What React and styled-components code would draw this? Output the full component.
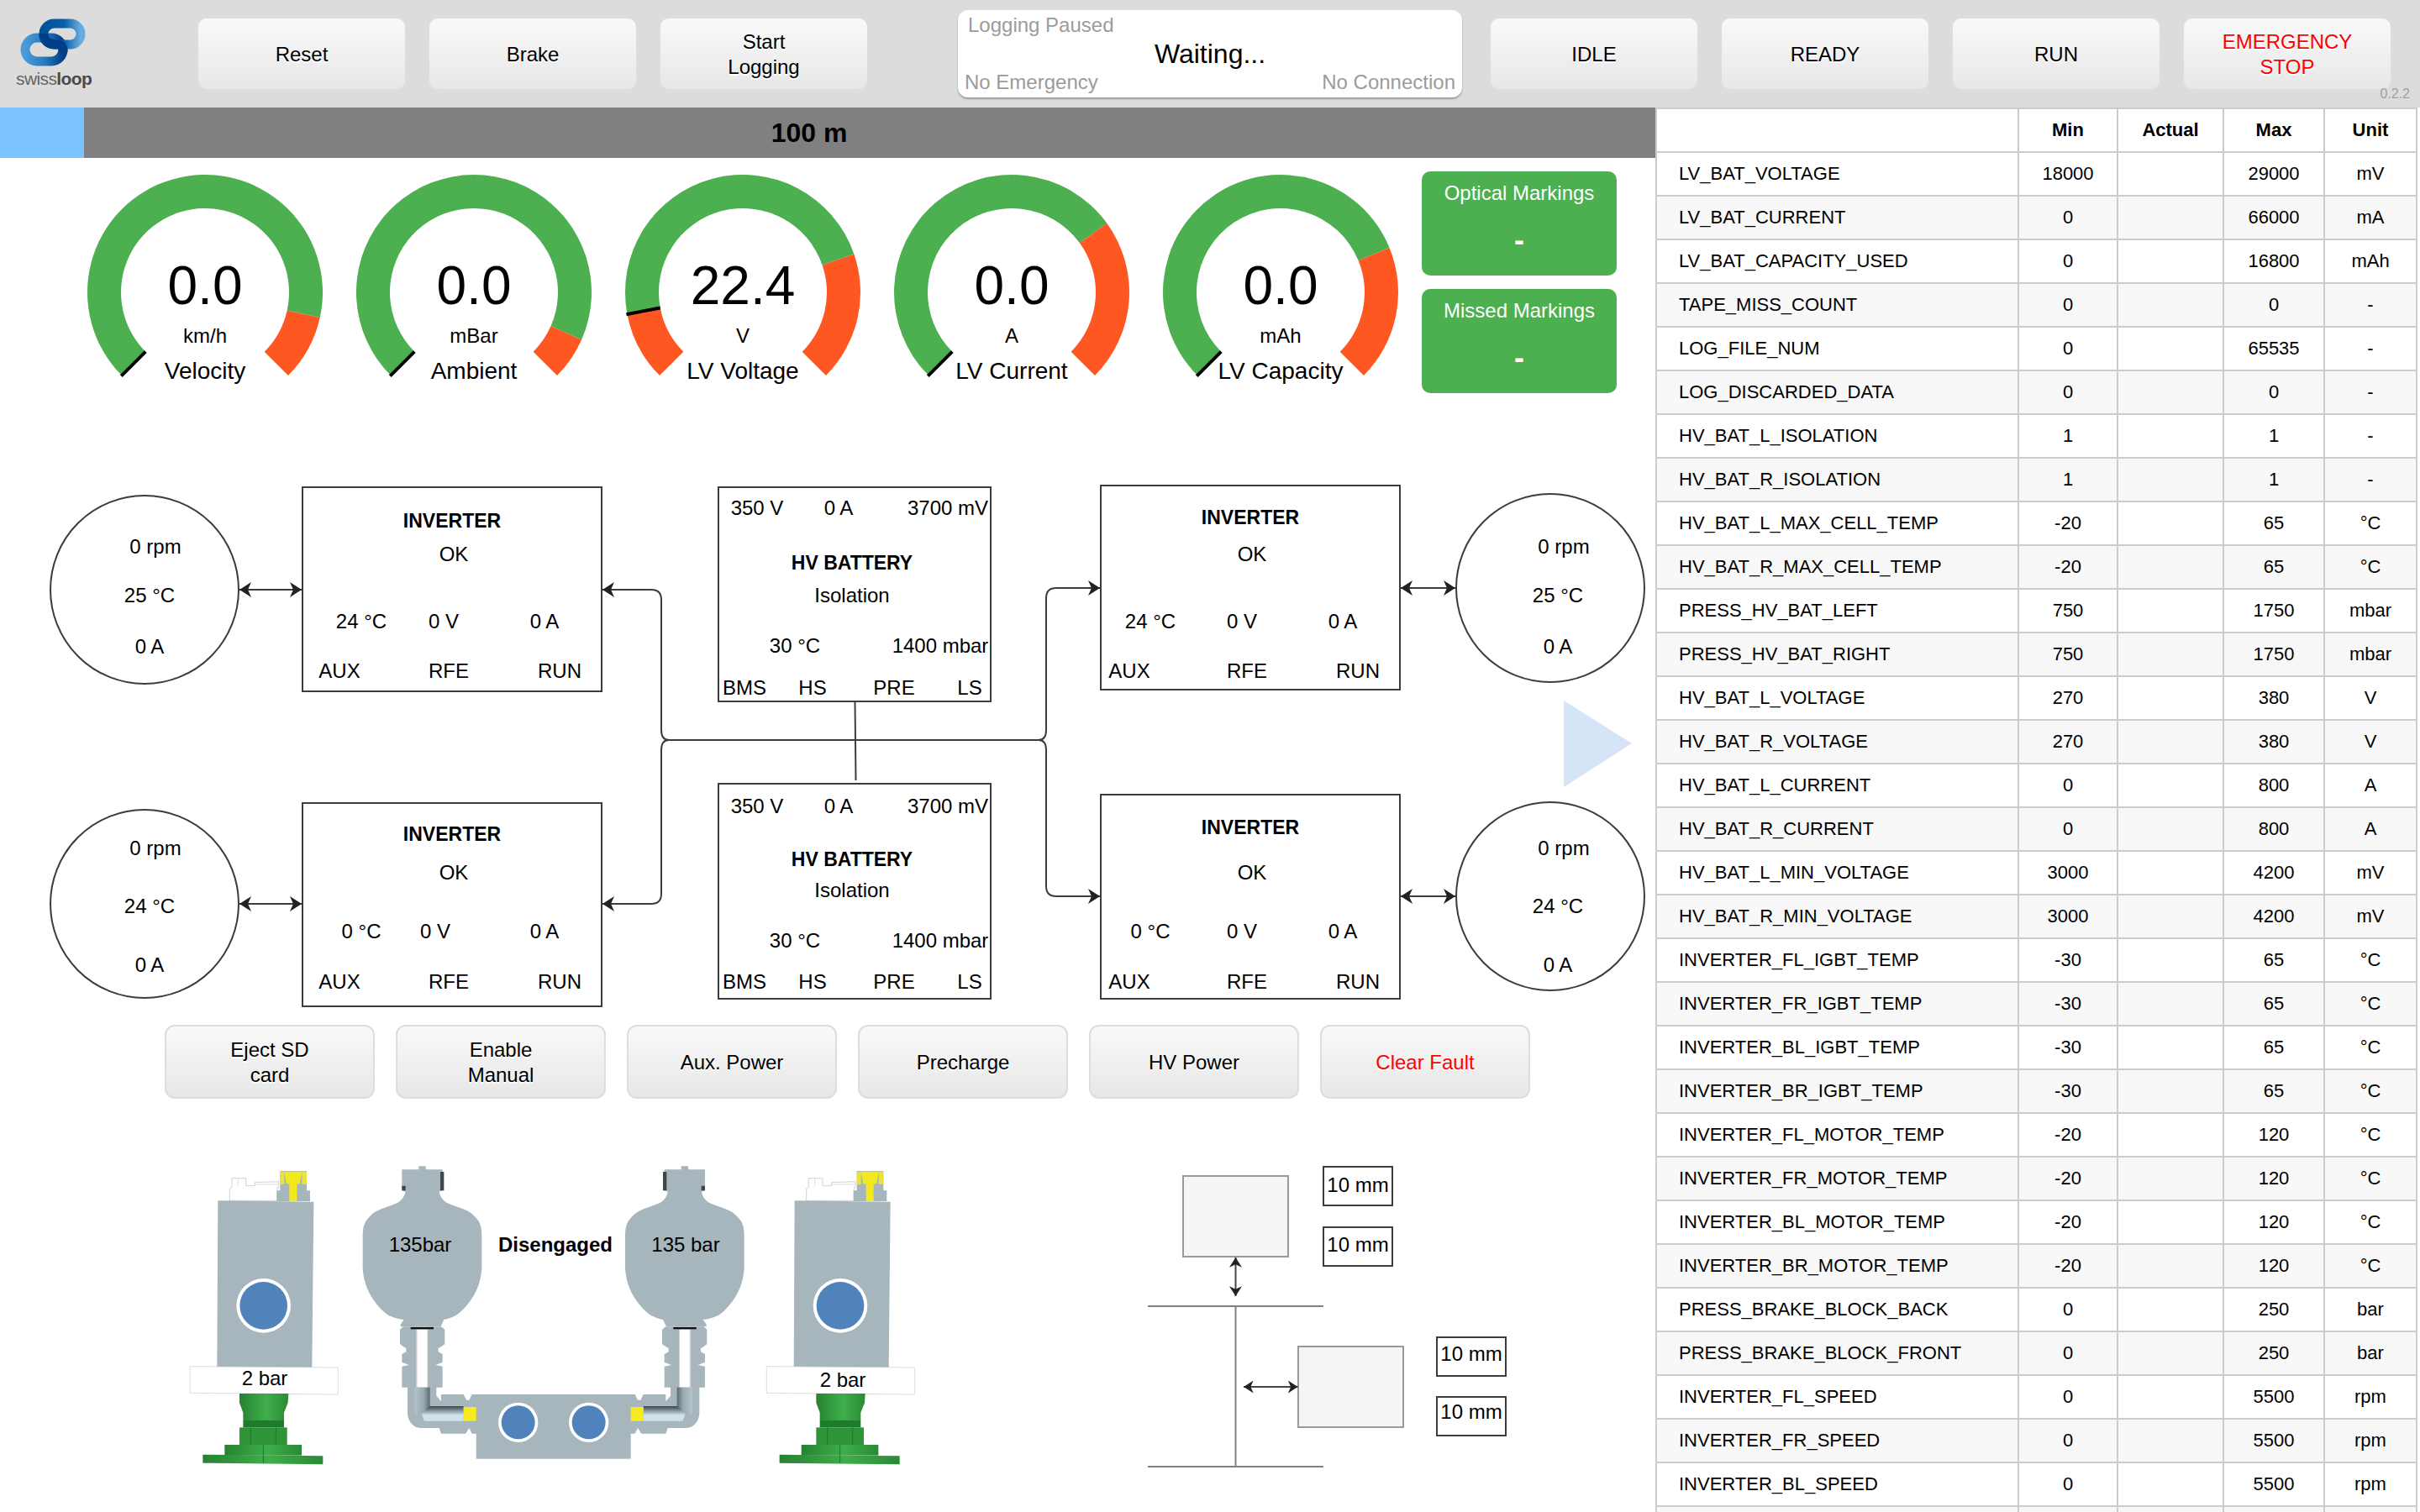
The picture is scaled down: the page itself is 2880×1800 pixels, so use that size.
import React from 'react'
import styled, { createGlobalStyle } from 'styled-components'

const GlobalStyle = createGlobalStyle`
  html, body {
    margin: 0;
    padding: 0;
    background: #fff;
    overflow: hidden;
  }
  body {
    font-family: "Liberation Sans", Arial, sans-serif;
    color: #000;
  }
`

const Page = styled.div`
  width: 2880px;
  height: 1800px;
  display: flex;
  flex-direction: column;
  overflow: hidden;
`

/* header */
const Header = styled.header`
  position: relative;
  height: 128px;
  flex: none;
  display: flex;
  align-items: center;
  background: #dcdcdc;
`

const LogoBox = styled.div`
  width: 234px;
  height: 128px;
  flex: none;
  padding: 20px 0 0 19px;
  box-sizing: border-box;
  svg {
    display: block;
  }
`

const LogoText = styled.div`
  font-size: 21px;
  line-height: 24px;
  letter-spacing: -0.6px;
  color: #666;
  margin-top: 2px;
  b {
    color: #4a4a4a;
  }
`

const ButtonRow = styled.div`
  display: flex;
  gap: 25px;
  flex: none;
  padding-left: ${p => p.$left || 0}px;
`

const Button = styled.button`
  width: 250px;
  height: 88px;
  flex: none;
  box-sizing: border-box;
  padding: 2px 0 0;
  border: 2px solid #ddd;
  border-radius: 12px;
  background: linear-gradient(to bottom, #f9f9f9, #e7e7e7);
  color: ${p => (p.$danger ? '#f00' : '#000')};
  font-family: inherit;
  font-size: 24px;
  line-height: 30px;
  text-align: center;
  white-space: pre-line;
  text-shadow: 0 2px 0 #fff;
`

const StatusPanel = styled.div`
  width: 600px;
  height: 104px;
  flex: none;
  margin: 0 32px 0 106px;
  box-sizing: border-box;
  padding: 4px 8px;
  display: grid;
  grid-template-columns: 1fr 1fr;
  grid-template-rows: 28px 40px 28px;
  background: #fff;
  border-radius: 12px;
  box-shadow: 0 2px 2px rgba(0, 0, 0, 0.3);
  font-size: 24px;
  line-height: 28px;
  color: #9b9b9b;
`

const StatusTop = styled.div`
  grid-column: 1 / 3;
  padding-left: 4px;
`

const StatusMain = styled.div`
  grid-column: 1 / 3;
  text-align: center;
  font-size: 32px;
  line-height: 40px;
  color: #000;
`

const StatusRight = styled.div`
  text-align: right;
`

const Version = styled.div`
  position: absolute;
  right: 12px;
  bottom: 8px;
  font-size: 16px;
  line-height: 16px;
  color: #a0a0a0;
`

/* main split */
const Body = styled.div`
  flex: 1;
  display: flex;
  min-height: 0;
`

const LeftPane = styled.div`
  width: 1970px;
  flex: none;
  display: flex;
  flex-direction: column;
`

const RightPane = styled.div`
  flex: 1;
  overflow: hidden;
`

const Progress = styled.div`
  position: relative;
  height: 60px;
  flex: none;
  padding-right: 44px;
  background: #808080;
  font-size: 32px;
  font-weight: bold;
  line-height: 60px;
  text-align: center;
`

const ProgressFill = styled.div`
  position: absolute;
  left: 0;
  top: 0;
  bottom: 0;
  background: #7cc4ff;
`

const ProgressText = styled.span`
  position: relative;
`

/* gauges */
const GaugeRow = styled.div`
  height: 372px;
  flex: none;
  box-sizing: border-box;
  padding: 16px 0 0 84px;
  display: flex;
  align-items: flex-start;
`

const GaugeBox = styled.div`
  position: relative;
  width: 320px;
  height: 270px;
  flex: none;
  svg {
    display: block;
  }
`

const GaugeText = styled.div`
  position: absolute;
  inset: 0;
  padding-top: 104px;
  display: flex;
  flex-direction: column;
  align-items: center;
`

const GaugeValue = styled.div`
  font-size: 64px;
  line-height: 64px;
`

const GaugeUnit = styled.div`
  font-size: 24px;
  line-height: 28px;
  margin-top: 14px;
`

const GaugeTitle = styled.div`
  font-size: 28px;
  line-height: 32px;
  margin-top: 12px;
`

const MarkingColumn = styled.div`
  margin-left: 8px;
  display: flex;
  flex-direction: column;
  gap: 16px;
`

const MarkingCard = styled.div`
  width: 232px;
  height: 124px;
  box-sizing: border-box;
  padding-top: 10px;
  background: #4caf50;
  border-radius: 10px;
  color: #fff;
  text-align: center;
  font-size: 24px;
  line-height: 32px;
`

const MarkingValue = styled.div`
  margin-top: 20px;
  font-size: 36px;
  font-weight: bold;
  line-height: 40px;
`

/* power diagram */
const Diagram = styled.div`
  position: relative;
  height: 660px;
  flex: none;
`

const Overlay = styled.svg`
  position: absolute;
  left: 0;
  top: 0;
`

const Node = styled.div`
  position: absolute;
  left: ${p => p.$x}px;
  top: ${p => p.$y}px;
  width: ${p => p.$w}px;
  height: ${p => p.$h}px;
  box-sizing: border-box;
  border: 2px solid #3c3c3c;
  border-radius: ${p => (p.$round ? '50%' : '0')};
`

const Label = styled.div`
  position: absolute;
  left: ${p => p.$x - 2}px;
  top: ${p => p.$y - 2}px;
  transform: translate(-50%, -50%);
  white-space: nowrap;
  font-size: ${p => (p.$bold ? 23 : 24)}px;
  font-weight: ${p => (p.$bold ? 'bold' : 'normal')};
  line-height: 28px;
`

const LowerRow = styled(ButtonRow)`
  height: 88px;
`

/* bottom pictures */
const Lower = styled.div`
  flex: 1;
  display: flex;
  padding: 52px 0 0 200px;
`

const Hydraulics = styled.div`
  position: relative;
  width: 920px;
  height: 420px;
  flex: none;
`

const GapPanel = styled.div`
  position: relative;
  width: 440px;
  height: 420px;
  flex: none;
  margin-left: 240px;
`

const GapBox = styled.div`
  position: absolute;
  left: ${p => p.$x}px;
  top: ${p => p.$y}px;
  width: 84px;
  height: 48px;
  box-sizing: border-box;
  border: 2px solid #3c3c3c;
  font-size: 24px;
  line-height: ${p => 44 - p.$lift * 2}px;
  text-align: center;
  white-space: nowrap;
`

const PicLabel = styled.div`
  position: absolute;
  left: ${p => p.$x}px;
  top: ${p => p.$y}px;
  transform: translate(-50%, -50%);
  white-space: nowrap;
  font-size: 24px;
  line-height: 28px;
  font-weight: ${p => (p.$bold ? 'bold' : 'normal')};
`

/* limits table */
const Table = styled.table`
  width: 905px;
  table-layout: fixed;
  border-collapse: collapse;
  font-size: 22px;
  line-height: 26px;
`

const Col = styled.col`
  width: ${p => p.$w}px;
`

const HeadCell = styled.th`
  height: 52px;
  padding: 0;
  border: 2px solid #ccc;
  font-weight: bold;
  text-align: center;
  box-sizing: border-box;
`

const Row = styled.tr`
  background: ${p => (p.$odd ? '#f8f8f8' : '#fff')};
`

const Cell = styled.td`
  height: 52px;
  padding: 0;
  border: 2px solid #ccc;
  text-align: center;
  box-sizing: border-box;
  white-space: nowrap;
`

const NameCell = styled(Cell)`
  padding-left: 26px;
  text-align: left;
`

const limits = [
  ['LV_BAT_VOLTAGE', 18000, 29000, 'mV'],
  ['LV_BAT_CURRENT', 0, 66000, 'mA'],
  ['LV_BAT_CAPACITY_USED', 0, 16800, 'mAh'],
  ['TAPE_MISS_COUNT', 0, 0, '-'],
  ['LOG_FILE_NUM', 0, 65535, '-'],
  ['LOG_DISCARDED_DATA', 0, 0, '-'],
  ['HV_BAT_L_ISOLATION', 1, 1, '-'],
  ['HV_BAT_R_ISOLATION', 1, 1, '-'],
  ['HV_BAT_L_MAX_CELL_TEMP', -20, 65, '°C'],
  ['HV_BAT_R_MAX_CELL_TEMP', -20, 65, '°C'],
  ['PRESS_HV_BAT_LEFT', 750, 1750, 'mbar'],
  ['PRESS_HV_BAT_RIGHT', 750, 1750, 'mbar'],
  ['HV_BAT_L_VOLTAGE', 270, 380, 'V'],
  ['HV_BAT_R_VOLTAGE', 270, 380, 'V'],
  ['HV_BAT_L_CURRENT', 0, 800, 'A'],
  ['HV_BAT_R_CURRENT', 0, 800, 'A'],
  ['HV_BAT_L_MIN_VOLTAGE', 3000, 4200, 'mV'],
  ['HV_BAT_R_MIN_VOLTAGE', 3000, 4200, 'mV'],
  ['INVERTER_FL_IGBT_TEMP', -30, 65, '°C'],
  ['INVERTER_FR_IGBT_TEMP', -30, 65, '°C'],
  ['INVERTER_BL_IGBT_TEMP', -30, 65, '°C'],
  ['INVERTER_BR_IGBT_TEMP', -30, 65, '°C'],
  ['INVERTER_FL_MOTOR_TEMP', -20, 120, '°C'],
  ['INVERTER_FR_MOTOR_TEMP', -20, 120, '°C'],
  ['INVERTER_BL_MOTOR_TEMP', -20, 120, '°C'],
  ['INVERTER_BR_MOTOR_TEMP', -20, 120, '°C'],
  ['PRESS_BRAKE_BLOCK_BACK', 0, 250, 'bar'],
  ['PRESS_BRAKE_BLOCK_FRONT', 0, 250, 'bar'],
  ['INVERTER_FL_SPEED', 0, 5500, 'rpm'],
  ['INVERTER_FR_SPEED', 0, 5500, 'rpm'],
  ['INVERTER_BL_SPEED', 0, 5500, 'rpm'],
]

const gauges = [
  { value: '0.0', unit: 'km/h', title: 'Velocity', hi: 102.4 },
  { value: '0.0', unit: 'mBar', title: 'Ambient', hi: 113.8 },
  { value: '22.4', unit: 'V', title: 'LV Voltage', lo: -100.7, hi: 71 },
  { value: '0.0', unit: 'A', title: 'LV Current', hi: 54 },
  { value: '0.0', unit: 'mAh', title: 'LV Capacity', hi: 67.7 },
]

const inverters = [
  {
    x: 359, y: 19, h: 245, head: 41, ok: 81, row: 161, foot: 220, temp: '24 °C', tempX: 71, voltX: 169, auxX: 45,
  },
  {
    x: 359, y: 395, h: 244, head: 38, ok: 84, row: 154, foot: 214, temp: '0 °C', tempX: 71, voltX: 159, auxX: 45,
  },
  {
    x: 1309, y: 17, h: 245, head: 39, ok: 83, row: 163, foot: 222, temp: '24 °C', tempX: 60, voltX: 169, auxX: 35,
  },
  {
    x: 1309, y: 385, h: 245, head: 40, ok: 94, row: 164, foot: 224, temp: '0 °C', tempX: 60, voltX: 169, auxX: 35,
  },
]

const batteries = [
  { y: 19, h: 257, top: 26, head: 91, iso: 130, row: 190, foot: 240 },
  { y: 372, h: 258, top: 28, head: 91, iso: 128, row: 188, foot: 237 },
]

const wheels = [
  { x: 59, y: 29, temp: '25 °C', rpmX: 126, tempX: 119, ys: [62, 120, 181] },
  { x: 59, y: 403, temp: '24 °C', rpmX: 126, tempX: 119, ys: [47, 116, 186] },
  { x: 1732, y: 27, temp: '25 °C', rpmX: 129, tempX: 122, ys: [64, 122, 183] },
  { x: 1732, y: 394, temp: '24 °C', rpmX: 129, tempX: 122, ys: [56, 125, 195] },
]

const polar = (r, deg, cx = 160, cy = 144) => {
  const a = (deg * Math.PI) / 180
  return [cx + r * Math.sin(a), cy - r * Math.cos(a)]
}

const sector = (from, to, R = 140, r = 100) => {
  const [x1, y1] = polar(R, from)
  const [x2, y2] = polar(R, to)
  const [x3, y3] = polar(r, to)
  const [x4, y4] = polar(r, from)
  const large = to - from > 180 ? 1 : 0
  return `M${x1} ${y1}A${R} ${R} 0 ${large} 1 ${x2} ${y2}L${x3} ${y3}A${r} ${r} 0 ${large} 0 ${x4} ${y4}Z`
}

const Gauge = ({ value, unit, title, lo, hi }) => {
  const start = lo === undefined ? -135 : lo
  const [nx1, ny1] = polar(100, start)
  const [nx2, ny2] = polar(141, start)
  return (
    <GaugeBox>
      <svg width="320" height="270">
        {lo !== undefined && <path d={sector(-135, lo)} fill="#ff5722" />}
        <path d={sector(start, hi)} fill="#4caf50" />
        <path d={sector(hi, 135)} fill="#ff5722" />
        <line x1={nx1} y1={ny1} x2={nx2} y2={ny2} stroke="#000" strokeWidth="4" />
      </svg>
      <GaugeText>
        <GaugeValue>{value}</GaugeValue>
        <GaugeUnit>{unit}</GaugeUnit>
        <GaugeTitle>{title}</GaugeTitle>
      </GaugeText>
    </GaugeBox>
  )
}

const Logo = () => (
  <LogoBox>
    <svg width="90" height="60" viewBox="0 0 90 60">
      <defs>
        <linearGradient id="ringTop" x1="0" x2="1" y1="0" y2="0">
          <stop offset="0" stopColor="#00529b" />
          <stop offset="0.55" stopColor="#0a5fa8" />
          <stop offset="1" stopColor="#69ade0" />
        </linearGradient>
        <linearGradient id="ringLow" x1="0" x2="1" y1="0" y2="0">
          <stop offset="0" stopColor="#4a9bd8" />
          <stop offset="0.5" stopColor="#2a7cc0" />
          <stop offset="1" stopColor="#003f85" />
        </linearGradient>
      </defs>
      <rect x="11" y="25" width="45" height="28" rx="14" fill="none" stroke="url(#ringLow)" strokeWidth="11" />
      <rect x="33" y="8" width="44" height="25" rx="12.5" fill="none" stroke="url(#ringTop)" strokeWidth="11" />
      <path d="M33 20 C33 30 40 33 50 33 C56 33 56 38 56 42" fill="none" stroke="#003f85" strokeWidth="11" />
    </svg>
    <LogoText>swiss<b>loop</b></LogoText>
  </LogoBox>
)

const Wires = () => (
  <Overlay width="1970" height="660">
    <defs>
      <marker id="tip" viewBox="0 0 14 18" refX="14" refY="9" markerWidth="14" markerHeight="18" markerUnits="userSpaceOnUse" orient="auto-start-reverse">
        <path d="M0 0L14 9L0 18L4 9Z" fill="#222" />
      </marker>
    </defs>
    <g fill="none" stroke="#3c3c3c" strokeWidth="2">
      <path d="M717 142H775Q787 142 787 154V309Q787 321 796 321H1236Q1245 321 1245 309V152Q1245 140 1257 140H1309" markerStart="url(#tip)" markerEnd="url(#tip)" />
      <path d="M717 516H775Q787 516 787 504V333Q787 321 796 321" markerStart="url(#tip)" />
      <path d="M1236 321Q1245 321 1245 333V495Q1245 507 1257 507H1309" markerEnd="url(#tip)" />
      <path d="M285 142H359" markerStart="url(#tip)" markerEnd="url(#tip)" />
      <path d="M285 516H359" markerStart="url(#tip)" markerEnd="url(#tip)" />
      <path d="M1667 140H1732" markerStart="url(#tip)" markerEnd="url(#tip)" />
      <path d="M1667 507H1732" markerStart="url(#tip)" markerEnd="url(#tip)" />
      <path d="M1017.5 276L1018.5 369" />
    </g>
    <polygon points="1861,274 1942,325 1861,377" fill="#d6e4f8" />
  </Overlay>
)

const Cylinder = () => (
  <g>
    <path d="M220 208V165L228 160V128H278V155H310V143L395 140V160H390V208Z" fill="#fff" stroke="#bbb" strokeWidth="2" />
    <path d="M250 130V155M312 150H392" fill="none" stroke="#ccc" strokeWidth="2" />
    <path d="M388 210V172H400V102H495V172H507V210Z" fill="#a6b6bc" />
    <path d="M400 150V104H495V150L478 150V108H415V150Z" fill="#e8e23a" />
    <path d="M415 106H478L470 148H460V210H433V148H423Z" fill="#f2ea1e" />
    <path d="M178 208L520 212L514 805H175Z" fill="#a6b6bc" />
    <circle cx="341" cy="583" r="97" fill="#fff" />
    <circle cx="341" cy="583" r="85" fill="#5082bb" />
    <path d="M78 800L607 804V900L78 895Z" fill="#fff" stroke="#ccc" strokeWidth="2" />
    <path d="M255 897H430L428 930L414 965V993H268V965L255 930Z" fill="url(#greenBody)" />
    <rect x="268" y="993" width="146" height="25" fill="#1f7a2c" />
    <rect x="255" y="1018" width="170" height="62" fill="#2f9438" />
    <path d="M295 1018V1080M385 1018V1080" stroke="#1f7a2c" strokeWidth="3" />
    <rect x="202" y="1080" width="275" height="38" fill="url(#greenBody)" />
    <path d="M124 1115L553 1120V1150L124 1145Z" fill="url(#greenBody)" />
    <path d="M340 1080V1146" stroke="#1f7a2c" strokeWidth="3" />
  </g>
)

const Accumulator = () => (
  <g>
    <path
      d="M835 97H895V85H920V97H980V172L968 176C970 195 985 212 1005 220C1040 235 1075 240 1095 265C1115 285 1120 300 1120 340V445C1118 510 1090 560 1050 600C1030 620 1005 630 985 633L973 658H830V650L842 633C810 630 785 620 765 600C725 560 697 510 695 445V340C695 300 700 285 720 265C740 240 775 235 810 220C830 212 845 195 847 176L835 172Z"
      fill="#a6b6bc"
    />
    <path d="M972 105H985V172H972ZM835 155H848V172H835Z" fill="#3c464c" />
    <path d="M840 658H975L988 668V720L975 730L965 735V748L980 756V785L955 795L980 800V875H958V905L975 925V900H1055L1065 920L1075 920L1085 900H1110V1040H1085L1075 1020L1062 1040H975L968 1020H905C875 1020 855 995 855 965V875H835V800L860 795L835 785V756L850 748V735L840 730L828 720V668Z" fill="#a6b6bc" />
    <rect x="885" y="668" width="45" height="207" fill="url(#tube)" />
    <rect x="866" y="660" width="82" height="7" fill="#111" />
    <rect x="880" y="875" width="55" height="95" fill="url(#elbowV)" />
    <path d="M905 970L935 942H1055V995H915Z" fill="url(#elbowH)" />
    <rect x="1055" y="945" width="48" height="50" fill="#f7ea1e" />
    <rect x="1100" y="900" width="278" height="230" fill="#a6b6bc" />
    <circle cx="1250" cy="1000" r="71" fill="#fff" />
    <circle cx="1250" cy="1000" r="60" fill="#5082bb" />
  </g>
)

const HydraulicPicture = () => (
  <Overlay width="920" height="420" viewBox="0 0 2760 1260">
    <defs>
      <linearGradient id="greenBody" x1="0" x2="1" y1="0" y2="0">
        <stop offset="0" stopColor="#268232" />
        <stop offset="0.55" stopColor="#3fae4a" />
        <stop offset="1" stopColor="#2a8a36" />
      </linearGradient>
      <linearGradient id="tube" x1="0" x2="1" y1="0" y2="0">
        <stop offset="0" stopColor="#bbb" />
        <stop offset="0.15" stopColor="#fff" />
        <stop offset="0.85" stopColor="#fff" />
        <stop offset="1" stopColor="#aaa" />
      </linearGradient>
      <linearGradient id="elbowV" x1="0" x2="1" y1="0" y2="0">
        <stop offset="0" stopColor="#b4c4cb" />
        <stop offset="0.6" stopColor="#99a9b0" />
        <stop offset="1" stopColor="#5a686e" />
      </linearGradient>
      <linearGradient id="elbowH" x1="0" x2="0" y1="0" y2="1">
        <stop offset="0" stopColor="#3c464c" />
        <stop offset="0.45" stopColor="#a8bac2" />
        <stop offset="0.6" stopColor="#cde2ea" />
        <stop offset="1" stopColor="#cde2ea" />
      </linearGradient>
    </defs>
    <Cylinder />
    <g transform="translate(2059 0)">
      <Cylinder />
    </g>
    <Accumulator />
    <g transform="translate(2752 0) scale(-1 1)">
      <Accumulator />
    </g>
  </Overlay>
)

const GapPicture = () => (
  <Overlay width="440" height="420">
    <defs>
      <marker id="gapTip" viewBox="0 0 14 18" refX="14" refY="9" markerWidth="12" markerHeight="15" markerUnits="userSpaceOnUse" orient="auto-start-reverse">
        <path d="M0 0L14 9L0 18L4 9Z" fill="#222" />
      </marker>
    </defs>
    <rect x="48" y="40" width="125" height="96" fill="#f5f5f5" stroke="#999" strokeWidth="2" />
    <rect x="185" y="243" width="125" height="96" fill="#f5f5f5" stroke="#999" strokeWidth="2" />
    <g fill="none" stroke="#808080" strokeWidth="2">
      <path d="M6 195H215M6 386H215M110.5 195V386" />
    </g>
    <g fill="none" stroke="#444" strokeWidth="2">
      <path d="M110.5 137V183" markerStart="url(#gapTip)" markerEnd="url(#gapTip)" />
      <path d="M120 291H184.5" markerStart="url(#gapTip)" markerEnd="url(#gapTip)" />
    </g>
  </Overlay>
)

const App = () => (
  <Page>
    <GlobalStyle />
    <Header>
      <Logo />
      <ButtonRow>
        <Button>Reset</Button>
        <Button>Brake</Button>
        <Button>{'Start\nLogging'}</Button>
      </ButtonRow>
      <StatusPanel>
        <StatusTop>Logging Paused</StatusTop>
        <StatusMain>Waiting...</StatusMain>
        <div>No Emergency</div>
        <StatusRight>No Connection</StatusRight>
      </StatusPanel>
      <ButtonRow>
        <Button>IDLE</Button>
        <Button>READY</Button>
        <Button>RUN</Button>
        <Button $danger>{'EMERGENCY\nSTOP'}</Button>
      </ButtonRow>
      <Version>0.2.2</Version>
    </Header>
    <Body>
      <LeftPane>
        <Progress>
          <ProgressFill style={{ width: '100px' }} />
          <ProgressText>100 m</ProgressText>
        </Progress>
        <GaugeRow>
          {gauges.map(g => <Gauge key={g.title} {...g} />)}
          <MarkingColumn>
            <MarkingCard>
              Optical Markings
              <MarkingValue>-</MarkingValue>
            </MarkingCard>
            <MarkingCard>
              Missed Markings
              <MarkingValue>-</MarkingValue>
            </MarkingCard>
          </MarkingColumn>
        </GaugeRow>
        <Diagram>
          <Wires />
          {wheels.map(w => (
            <Node key={`${w.x}-${w.y}`} $x={w.x} $y={w.y} $w={226} $h={226} $round>
              <Label $x={w.rpmX} $y={w.ys[0]}>0 rpm</Label>
              <Label $x={w.tempX} $y={w.ys[1]}>{w.temp}</Label>
              <Label $x={w.tempX} $y={w.ys[2]}>0 A</Label>
            </Node>
          ))}
          {inverters.map(i => (
            <Node key={`${i.x}-${i.y}`} $x={i.x} $y={i.y} $w={358} $h={i.h}>
              <Label $bold $x={179} $y={i.head}>INVERTER</Label>
              <Label $x={181} $y={i.ok}>OK</Label>
              <Label $x={i.tempX} $y={i.row}>{i.temp}</Label>
              <Label $x={i.voltX} $y={i.row}>0 V</Label>
              <Label $x={289} $y={i.row}>0 A</Label>
              <Label $x={i.auxX} $y={i.foot}>AUX</Label>
              <Label $x={175} $y={i.foot}>RFE</Label>
              <Label $x={307} $y={i.foot}>RUN</Label>
            </Node>
          ))}
          {batteries.map(b => (
            <Node key={b.y} $x={854} $y={b.y} $w={326} $h={b.h}>
              <Label $x={47} $y={b.top}>350 V</Label>
              <Label $x={144} $y={b.top}>0 A</Label>
              <Label $x={274} $y={b.top}>3700 mV</Label>
              <Label $bold $x={160} $y={b.head}>HV BATTERY</Label>
              <Label $x={160} $y={b.iso}>Isolation</Label>
              <Label $x={92} $y={b.row}>30 °C</Label>
              <Label $x={265} $y={b.row}>1400 mbar</Label>
              <Label $x={32} $y={b.foot}>BMS</Label>
              <Label $x={113} $y={b.foot}>HS</Label>
              <Label $x={210} $y={b.foot}>PRE</Label>
              <Label $x={300} $y={b.foot}>LS</Label>
            </Node>
          ))}
        </Diagram>
        <LowerRow $left={196}>
          <Button>{'Eject SD\ncard'}</Button>
          <Button>{'Enable\nManual'}</Button>
          <Button>Aux. Power</Button>
          <Button>Precharge</Button>
          <Button>HV Power</Button>
          <Button $danger>Clear Fault</Button>
        </LowerRow>
        <Lower>
          <Hydraulics>
            <HydraulicPicture />
            <PicLabel $x={300} $y={122}>135bar</PicLabel>
            <PicLabel $bold $x={461} $y={122}>Disengaged</PicLabel>
            <PicLabel $x={616} $y={122}>135 bar</PicLabel>
            <PicLabel $x={115} $y={281}>2 bar</PicLabel>
            <PicLabel $x={803} $y={283}>2 bar</PicLabel>
          </Hydraulics>
          <GapPanel>
            <GapPicture />
            <GapBox $x={214} $y={28} $lift={1}>10 mm</GapBox>
            <GapBox $x={214} $y={100} $lift={2}>10 mm</GapBox>
            <GapBox $x={349} $y={231} $lift={3}>10 mm</GapBox>
            <GapBox $x={349} $y={302} $lift={5}>10 mm</GapBox>
          </GapPanel>
        </Lower>
      </LeftPane>
      <RightPane>
        <Table>
          <colgroup>
            <Col $w={431} />
            <Col $w={118} />
            <Col $w={126} />
            <Col $w={120} />
            <Col $w={110} />
          </colgroup>
          <thead>
            <tr>
              <HeadCell />
              <HeadCell>Min</HeadCell>
              <HeadCell>Actual</HeadCell>
              <HeadCell>Max</HeadCell>
              <HeadCell>Unit</HeadCell>
            </tr>
          </thead>
          <tbody>
            {limits.map(([name, min, max, unit], i) => (
              <Row key={name} $odd={i % 2 === 1}>
                <NameCell>{name}</NameCell>
                <Cell>{min}</Cell>
                <Cell />
                <Cell>{max}</Cell>
                <Cell>{unit}</Cell>
              </Row>
            ))}
            <Row $odd>
              <Cell />
              <Cell />
              <Cell />
              <Cell />
              <Cell />
            </Row>
          </tbody>
        </Table>
      </RightPane>
    </Body>
  </Page>
)

export default App
